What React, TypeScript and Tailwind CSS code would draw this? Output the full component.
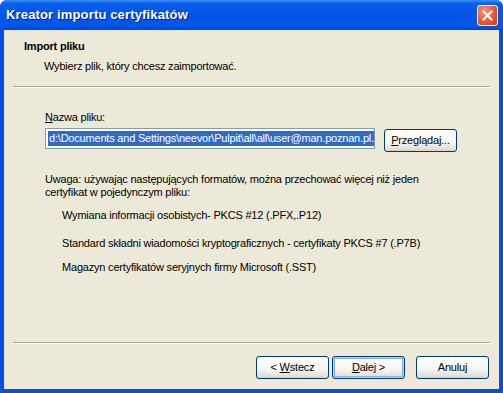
import React from "react"

const ui = { fontFamily: "'Liberation Sans', Arial, sans-serif" }

function Btn({
  children,
  primary = false,
  className = "",
}: {
  children: React.ReactNode
  primary?: boolean
  className?: string
}) {
  return (
    <div
      className={
        "flex items-center justify-center h-[23px] rounded-[3px] border border-[#003C74] text-[11px] text-black bg-[linear-gradient(to_bottom,#FFFFFF_0%,#F5F4EF_60%,#E3E0D6_90%,#D6D0C5_100%)] " +
        (primary ? "shadow-[inset_0_0_0_1px_#B9D1F6,inset_0_0_0_2px_#89ADE4] " : "") +
        className
      }
    >
      {children}
    </div>
  )
}

export default function App() {
  return (
    <div
      className="w-[503px] h-[393px] flex flex-col rounded-t-[7px] overflow-hidden bg-[#0A4FDB]"
      style={ui}
    >
      {/* Title bar */}
      <div className="h-[30px] shrink-0 flex items-center justify-between pl-[6px] pr-[5px] bg-[linear-gradient(to_bottom,#3A8FF8_0%,#0A5EEB_12%,#0055E5_45%,#0058EC_85%,#0047D0_100%)]">
        <span className="text-white font-bold text-[13px] tracking-[0.15px] [text-shadow:1px_1px_0_#0A1E88]">
          Kreator importu certyfikatów
        </span>
        <div className="w-[21px] h-[21px] rounded-[3px] border border-white bg-[radial-gradient(circle_at_35%_30%,#F29A7C_0%,#E35A32_55%,#C8401C_100%)] flex items-center justify-center">
          <svg width="11" height="11" viewBox="0 0 11 11">
            <path d="M1.5 1.5 L9.5 9.5 M9.5 1.5 L1.5 9.5" stroke="white" strokeWidth="2" strokeLinecap="square" />
          </svg>
        </div>
      </div>

      {/* Body */}
      <div className="flex-1 flex flex-col mx-[4px] mb-[4px] bg-[#ECE9D8] text-[11px] leading-[13px] tracking-[-0.2px] text-black">
        {/* Header */}
        <div className="h-[56px] shrink-0 pt-[10px] pl-[20px]">
          <div className="font-bold">Import pliku</div>
          <div className="mt-[7px] pl-[20px]">Wybierz plik, który chcesz zaimportować.</div>
        </div>
        <div className="mx-[9px] h-[2px] border-t border-[#ACA899] border-b-white border-b" />

        {/* Content */}
        <div className="flex-1 flex flex-col pl-[41px] pt-[23px]">
          <div>
            <span className="underline">N</span>azwa pliku:
          </div>
          <div className="mt-[4px] flex items-start gap-[9px]">
            <div className="w-[330px] h-[21px] border border-[#7F9DB9] bg-white flex items-center pl-[2px] overflow-hidden whitespace-nowrap">
              <span className="bg-[#316AC5] text-white leading-[15px] pl-[1px]">
                d:\Documents and Settings\neevor\Pulpit\all\all\user@man.poznan.pl.pfx
              </span>
            </div>
            <Btn className="w-[73px] mt-[1px] h-[21px]">
              <span>
                <span className="underline">P</span>rzeglądaj...
              </span>
            </Btn>
          </div>

          <div className="mt-[21px]">
            Uwaga: używając następujących formatów, można przechować więcej niż jeden
            <br />
            certyfikat w pojedynczym pliku:
          </div>

          <div className="mt-[10px] pl-[17px] flex flex-col">
            <div>Wymiana informacji osobistych- PKCS #12 (.PFX,.P12)</div>
            <div className="mt-[15px]">Standard składni wiadomości kryptograficznych - certyfikaty PKCS #7 (.P7B)</div>
            <div className="mt-[11px]">Magazyn certyfikatów seryjnych firmy Microsoft (.SST)</div>
          </div>
        </div>

        <div className="mx-[9px] h-[2px] border-t border-[#ACA899] border-b-white border-b" />

        {/* Footer buttons */}
        <div className="h-[45px] shrink-0 flex items-start justify-end pt-[12px] pr-[10px]">
          <Btn className="w-[73px]">
            <span>
              &lt; <span className="underline">W</span>stecz
            </span>
          </Btn>
          <Btn primary className="w-[73px] ml-[3px]">
            <span>
              <span className="underline">D</span>alej &gt;
            </span>
          </Btn>
          <Btn className="w-[73px] ml-[11px]">Anuluj</Btn>
        </div>
      </div>
    </div>
  )
}
